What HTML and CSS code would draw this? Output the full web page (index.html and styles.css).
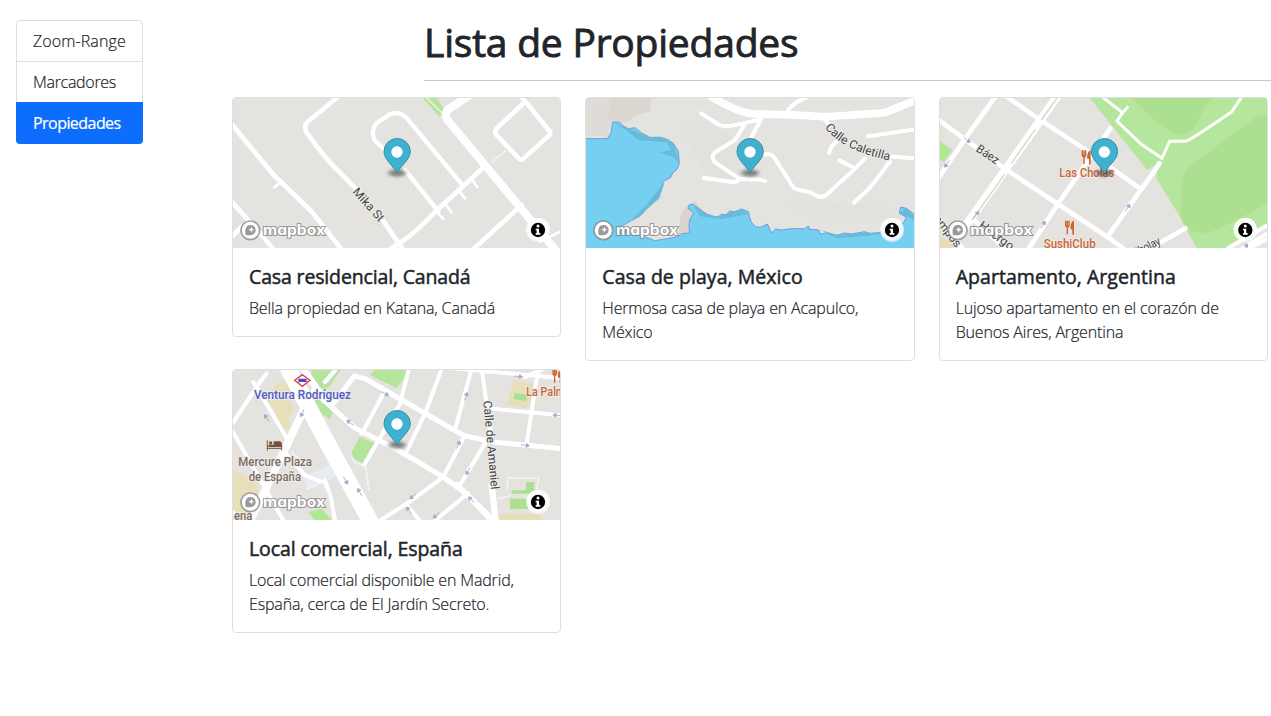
FILE: index.html
```html
<!DOCTYPE html>
<html lang="es">
<head>
<meta charset="utf-8">
<title>Lista de Propiedades</title>
<link rel="stylesheet" href="styles.css">
</head>
<body>
<svg class="defs" aria-hidden="true">
  <defs>
    <filter id="soft" x="-50%" y="-100%" width="200%" height="300%"><feGaussianBlur stdDeviation="6 4"/></filter>
    <g id="pin">
      <ellipse cx="0" cy="249" rx="26" ry="11" fill="#333" opacity=".55" filter="url(#soft)"/>
      <path d="M0 249C-9 229-39 209-39 185A39.500 39.500 0 0 1 40 185C40 209 9 229 0 249Z" fill="#3fb1ce" stroke="#328ea5" stroke-width="3"/>
      <circle cx="0" cy="186" r="17" fill="#fff"/>
    </g>
    <g id="logo">
      <circle cx="76" cy="421" r="28" fill="#fff" stroke="#777" stroke-opacity=".7" stroke-width="5"/>
      <path d="M62 435C58 414 65 405 77 405A15 15 0 0 1 92 419C92 431 82 439 62 435Z" fill="#777" fill-opacity=".75"/>
      <path d="M79 410L81.500 416.500L88 419L81.500 421.500L79 428L76.500 421.500L70 419L76.500 416.500Z" fill="#fff"/>
      <text class="wordmark" x="114" y="436" textLength="186" lengthAdjust="spacingAndGlyphs">mapbox</text>
    </g>
    <g id="info">
      <circle cx="939" cy="420" r="36" fill="#fff" fill-opacity=".6"/>
      <circle cx="939" cy="417" r="34" fill="#fff" fill-opacity=".75"/>
      <circle cx="939" cy="420" r="21.500"/>
      <circle cx="939" cy="408" r="4.500" fill="#fff"/>
      <path d="M932 416H942V429H946V434H932V429H935V421H932Z" fill="#fff"/>
    </g>
    <g id="fork">
      <path d="M-12-21V-8Q-12-2-7-2V20M-7-21V-2M-2-21V-8Q-2-2-7-2" fill="none" stroke-width="4" stroke="#d0632a"/>
      <path d="M13-21V21H8V5H3C2-8 5-20 13-21Z" fill="#d0632a"/>
    </g>
    <path id="arrow" d="M-13 0H11M3-6L12 0L3 6Z" fill="#a6aac7" stroke="#a6aac7" stroke-width="2.500"/>
  </defs>
</svg>

<div class="page">
  <nav class="menu">
    <a class="item zoom-link">Zoom-Range</a>
    <a class="item marks-link">Marcadores</a>
    <a class="item active">Propiedades</a>
  </nav>
  <main class="content">
    <header class="heading"><h1>Lista de Propiedades</h1></header>
    <div class="cards">

      <article class="card">
        <svg class="map" viewBox="24 24 982 450" preserveAspectRatio="none">
          <path d="M590 20H633L661 65L643 80Z" fill="#b5e49b"/>
          <path d="M606 24L652 70" class="track"/>
          <g class="roads">
            <path stroke-width="15" d="M340 20L249 95Q235 108 244 126Q300 205 335 238L400 304M470 385L532 476M10 90L145 254L260 365L348 476M15 330L100 423L147 480M20 440L50 410M475 490L530 455Q575 425 632 364L778 230M890 345L742 480M885 15L975 125Q979 134 967 141L894 207Q886 212 879 203L814 134Q808 123 816 114L894 41"/>
            <path stroke-width="14" d="M540 240L640 364M485 185L450 152Q435 125 454 100L494 73Q520 62 543 82L712 285"/>
            <path stroke-width="25" d="M735 15L670 58Q656 72 669 92L990 478"/>
            <path stroke-width="9" d="M148 292L168 276M738 264L756 290M703 303L720 325M662 344L680 367M634 364L655 387M945 455L1008 424"/>
          </g>
          <path d="M800 217L842 182" class="track"/>
          <text class="street" transform="translate(381 307) rotate(48)" textLength="122" lengthAdjust="spacingAndGlyphs">Mika St</text>
          <use href="#pin" x="516"/><use href="#logo"/><use href="#info"/>
        </svg>
        <div class="card-body"><h5 class="t1">Casa residencial, Canadá</h5><p class="d1">Bella propiedad en Katana, Canadá</p></div>
      </article>

      <article class="card">
        <svg class="map" viewBox="24 24 982 450" preserveAspectRatio="none">
          <path d="M90 24H220L215 65Q165 75 145 98L75 95Z" fill="#dbd6d0"/>
          <path d="M24 24H100L90 75L102 98L90 140L24 136Z" fill="#dfdcd7"/>
          <path d="M300 100Q360 75 410 110L520 180L465 280L380 250ZM610 335Q680 310 790 350L900 330L970 400L720 405Z" fill="#e1e1dd"/>
          <path d="M310 365L350 330Q375 380 430 384L500 362L520 415L300 440Z" fill="#dbd4cc"/>
          <path d="M10 146H88L99 128L104 96L125 97L135 107L151 116L170 113L190 128L215 142L248 142L270 149L286 160L301 184L304 220L297 238L286 247L277 263L256 274L249 296L240 302L236 318L221 330L205 348L197 366L187 377L160 392L130 409L165 430L200 440L230 452L260 447L302 440L312 431L335 429L333 410L335 390L347 368L330 355L334 344L345 343L365 357L384 371L403 378L420 381L430 373L445 374L455 363L470 366L490 357L512 365L514 380L520 396L533 411L550 411L568 402L581 429L592 417L610 420L640 416L680 416L691 408L695 418L722 420L728 433L745 428L760 436L780 435L800 429L820 432L860 425L880 432L915 425L940 410L976 399L985 382L964 370L968 351L985 355L1020 382V490H10Z" fill="#75cff0" stroke="#6b9de7" stroke-width="3"/>
          <path d="M104 96L151 116L215 142L248 142L286 160L304 220L286 200L245 188L278 180L267 157L180 150L145 120Z" fill="#68bad7"/>
          <path d="M260 276L244 325L180 382L160 391L205 345ZM345 343L384 371L420 381L490 357L512 372L430 387L365 379ZM728 420L780 435L915 425L920 432L780 445ZM964 370L985 355L1010 380V390Z" fill="#68bad7"/>
          <g class="roads">
            <path stroke-width="24" d="M400 20Q495 78 550 72Q650 74 740 80Q910 70 920 68L1010 32"/>
            <path stroke-width="13" d="M625 70Q635 42 690 20M370 70L421 103Q438 113 473 105L549 88M550 86L520 142M502 101L471 150L410 188Q398 198 409 215L482 265Q478 278 465 276L377 264M480 267L548 269L561 274M550 192L575 193Q587 197 597 215L634 273Q644 297 660 299L700 308Q732 332 750 310L830 237L862 205M785 211L828 234M738 86L756 107M777 153L761 169L753 189M870 139L1010 118M940 200L1010 205M936 215L875 294L828 338"/>
          </g>
          <path id="caletilla" d="M741 112Q790 182 945 214" fill="none"/>
          <text class="street"><textPath href="#caletilla" textLength="222" lengthAdjust="spacingAndGlyphs">Calle Caletilla</textPath></text>
          <use href="#pin" x="516"/><use href="#logo"/><use href="#info" x="3"/>
        </svg>
        <div class="card-body"><h5 class="t2">Casa de playa, México</h5><p class="d2">Hermosa casa de playa en Acapulco,<br>México</p></div>
      </article>

      <article class="card">
        <svg class="map" viewBox="29 24 982 450" preserveAspectRatio="none">
          <path d="M475 20L560 126L650 240L685 220L677 265L740 365L800 476H900L1015 400V20Z" fill="#b5e69e"/>
          <path d="M605 24Q695 125 750 134Q785 135 805 95Q820 50 850 24ZM1011 75H985L915 125L775 232Q750 260 752 300V365Q753 430 825 430Q850 430 1011 340Z" fill="#aae08f" stroke="#c6dc92" stroke-width="3"/>
          <path d="M24 150L65 180L40 216L24 204Z" fill="#aee890"/>
          <path d="M24 435L90 476H24Z" fill="#e7dcb4"/>
          <path d="M900 476L1012 402V476Z" fill="#e4e4e2"/>
          <path d="M890 476L1012 405M935 476L1012 430M952 476L1012 446" fill="none" stroke="#fff" stroke-width="12"/>
          <g class="roads">
            <path stroke-width="15" d="M20 86L232 242L533 442L580 476M215 10L330 90L458 174L628 295M195 20L105 145L24 265M540 115L384 340L295 476M672 243L533 438M687 220L672 243M15 370L100 480M130 390L225 476M765 415L615 500"/>
            <path stroke-width="26" d="M387 10L105 409"/>
          </g>
          <path d="M380 24L333 90M315 118L243 220M222 254L125 390" stroke="#cddbc7" stroke-width="4" fill="none"/>
          <path d="M515 20L577 68L594 49M577 68L560 93L632 162L695 205L718 154H765Q780 151 904 65L935 20" fill="none" stroke="#fff" stroke-width="9"/>
          <use href="#arrow" transform="translate(110 150) rotate(36)"/><use href="#arrow" transform="translate(50 222) rotate(125)"/><use href="#arrow" transform="translate(138 374) rotate(-55)"/><use href="#arrow" transform="translate(338 404) rotate(-55)"/><use href="#arrow" transform="translate(592 353) rotate(-55)"/><use href="#arrow" transform="translate(945 472) rotate(-55)"/>
          <text class="street" transform="translate(135 182) rotate(34)" textLength="75" lengthAdjust="spacingAndGlyphs">Báez</text>
          <text class="street" transform="translate(143 411) rotate(36)" textLength="120" lengthAdjust="spacingAndGlyphs">Huergo</text>
          <text class="street" transform="translate(-6 369) rotate(52)" textLength="134" lengthAdjust="spacingAndGlyphs">Campos</text>
          <text class="street" transform="translate(590 514) rotate(-27)" textLength="116" lengthAdjust="spacingAndGlyphs">Arribolay</text>
          <use href="#fork" x="468" y="202"/><use href="#fork" x="418" y="413"/>
          <text class="poi food" x="387" y="262" textLength="165" lengthAdjust="spacingAndGlyphs">Las Cholas</text>
          <text class="poi food" x="340" y="473" textLength="156" lengthAdjust="spacingAndGlyphs">SushiClub</text>
          <use href="#pin" x="522"/><use href="#logo" x="6"/><use href="#info" x="6"/>
        </svg>
        <div class="card-body"><h5 class="t3">Apartamento, Argentina</h5><p class="d3">Lujoso apartamento en el corazón de<br>Buenos Aires, Argentina</p></div>
      </article>

      <article class="card">
        <svg class="map" viewBox="24 24 982 450" preserveAspectRatio="none">
          <path d="M260 20H350L305 85L260 65ZM245 80L325 145L315 172L290 155ZM450 20H560L515 78L435 40ZM404 224L451 245L416 305L384 287L380 270Z" fill="#b5e49b"/>
          <path d="M115 105L170 55L212 70L190 110L206 138L190 170L196 200L160 200L150 145ZM24 325L95 358L105 430L24 474ZM867 53L940 69L905 138L845 130ZM820 456H950V476H820Z" fill="#e6dfb9"/>
          <path d="M234 346L325 304L328 320L360 330L375 355L330 345L252 385Z" fill="#e9ebf2"/>
          <path d="M868 93L906 98L903 117L866 111ZM860 385H903V360H928V395H860ZM855 410H910V441H855Z" fill="#aae090"/>
          <path d="M250 450L290 440L320 474H268Z" fill="#aee890"/>
          <g class="roads">
            <path stroke-width="13" d="M-5 225L105 60L125 35M85 60L195 244L180 270M24 210L178 480M330 25L300 60M178 270L240 340L290 360M650 20L600 155L540 278M740 20L691 200M552 20L525 125L418 308M475 95L410 215M940 20L905 243M770 20L800 235M800 140L1010 160M780 245L704 370M720 220L655 345L560 415L465 476M730 393L630 476M545 430L585 476M690 20L1010 48M900 45L955 20M695 365L810 476M24 450L45 476M300 355L318 408L330 476"/>
            <path stroke-width="16" d="M265 85L385 195L520 265L655 345L720 393L800 476M325 125L388 42L420 50L715 220L805 240L1010 260"/>
            <path stroke-width="24" d="M240 135L118 390L75 476"/>
            <path stroke-width="50" d="M190 20L240 115L300 230L448 500"/>
            <path stroke-width="20" d="M230 15L290 100M240 125L290 210M800 370L812 476"/>
          </g>
          <path d="M420 305L432 382M380 285L390 302L415 310M845 382L850 348H940L935 385M820 410L860 400M200 270L240 310M245 382L290 360L320 410" class="track"/>
          <g fill="none">
            <use href="#arrow" transform="translate(125 168) rotate(237)"/><use href="#arrow" transform="translate(232 153) rotate(115)"/><use href="#arrow" transform="translate(375 182) rotate(218)"/><use href="#arrow" transform="translate(480 95) rotate(28)"/><use href="#arrow" transform="translate(723 103) rotate(-72)"/><use href="#arrow" transform="translate(880 43) rotate(5)"/><use href="#arrow" transform="translate(996 160) rotate(184)"/><use href="#arrow" transform="translate(901 250) rotate(5)"/><use href="#arrow" transform="translate(700 248) rotate(-67)"/><use href="#arrow" transform="translate(729 328) rotate(120)"/><use href="#arrow" transform="translate(362 356) rotate(60)"/><use href="#arrow" transform="translate(404 390) rotate(240)"/><use href="#arrow" transform="translate(564 403) rotate(145)"/><use href="#arrow" transform="translate(552 445) rotate(235)"/><use href="#arrow" transform="translate(634 460) rotate(140)"/><use href="#arrow" transform="translate(739 413) rotate(222)"/>
          </g>
          <path d="M232 38L255 55L232 73L209 55Z" fill="#fff" stroke="#e9353e" stroke-width="4"/><path d="M220 50H245V60H220Z" fill="#4150ca"/>
          <path d="M127 235V266M127 259H170M170 266V249" stroke="#79503a" stroke-width="3" fill="none"/><path d="M146 238H165Q171 239 171 252H146ZM130 248H171V255H130Z" fill="#79503a"/><circle cx="137" cy="243" r="5" fill="#79503a"/>
          <text class="poi metro" x="87" y="111" textLength="291" lengthAdjust="spacingAndGlyphs">Ventura Rodríguez</text>
          <text class="poi hotel" x="40" y="312" textLength="221" lengthAdjust="spacingAndGlyphs">Mercure Plaza</text>
          <text class="poi hotel" x="71" y="356" textLength="157" lengthAdjust="spacingAndGlyphs">de España</text>
          <text class="poi hotel" x="27" y="474" textLength="55" lengthAdjust="spacingAndGlyphs">ena</text>
          <text class="poi food" x="904" y="102" textLength="134" lengthAdjust="spacingAndGlyphs">La Palma</text><use href="#fork" x="996" y="42"/>
          <text class="street" transform="translate(775 117) rotate(85)" textLength="267" lengthAdjust="spacingAndGlyphs">Calle de Amaniel</text>
          <use href="#pin" x="516"/><use href="#logo"/><use href="#info"/>
        </svg>
        <div class="card-body"><h5 class="t4">Local comercial, España</h5><p class="d4">Local comercial disponible en Madrid,<br>España, cerca de El Jardín Secreto.</p></div>
      </article>
    </div>
  </main>
</div>
</body>
</html>
```
FILE: styles.css
```css
* { box-sizing: border-box; }
html { overflow: hidden; }
body {
  margin: 0;
  background: #fff;
  color: #212529;
  font: 300 16px/24px "Open Sans", "Noto Sans", sans-serif;
  -webkit-text-stroke: .2px currentColor;
  overflow: hidden;
}
svg { -webkit-text-stroke: 0; }
h1, h5, p { margin: 0; white-space: nowrap; }
.defs { position: absolute; width: 0; height: 0; }
.page { display: flex; width: 1280px; padding: 20px 0 0 16px; }
.menu {
  display: flex;
  flex-direction: column;
  flex: none;
  width: 127px;
  height: 124px;
  border: 1px solid #dfdfdf;
  border-radius: 4px;
}
.item { height: 41px; padding: 8px 16px; border-bottom: 1px solid #dfdfdf; white-space: nowrap; }
.zoom-link { letter-spacing: .1px; }
.marks-link { height: 40px; border-bottom: 0; letter-spacing: -.3px; }
.item.active {
  height: 42px;
  margin: 0 -1px -1px;
  padding: 9px 17px;
  border: 0;
  border-radius: 0 0 4px 4px;
  background: #0d6efd;
  color: #fff;
  font-weight: 400;
  letter-spacing: -.55px;
}
.content { flex: none; width: 1036px; margin-left: 89px; }
.heading { height: 61px; margin-left: 192px; border-bottom: 1px solid #c8c9ca; width: 847px; }
h1 { font-size: 39px; line-height: 44px; font-weight: 400; letter-spacing: -.22px; -webkit-text-stroke: .9px currentColor; }
.cards {
  display: grid;
  grid-template-columns: repeat(3, 329.33px);
  gap: 8px 24px;
  align-items: start;
  margin-top: 16px;
}
.card { border: 1px solid #dfdfdf; border-radius: 4px; overflow: hidden; }
.map { display: block; width: 100%; height: 150px; background: #e4e3e0; }
.card-body { padding: 17px 16px 16px; }
h5 { font-size: 19.5px; line-height: 24px; font-weight: 400; margin-bottom: 7px; -webkit-text-stroke: .5px currentColor; }
.t1 { letter-spacing: -.15px; }
.t2, .t3 { letter-spacing: .05px; }
.t4 { letter-spacing: -.1px; }
.d1, .d2, .d3, .d4 { letter-spacing: -.16px; }
.roads { fill: none; stroke: #fff; stroke-linecap: round; stroke-linejoin: round; filter: drop-shadow(0 0 1px #c5c5de); }
.track { fill: none; stroke: #f7f7fa; stroke-width: 5; stroke-dasharray: 6 2; }
.street, .poi {
  font-family: Roboto, sans-serif;
  font-size: 36px;
  font-weight: 400;
  fill: #444;
  stroke: #efefed;
  stroke-width: 5px;
  paint-order: stroke;
}
.poi { font-weight: 500; }
.food { fill: #cb6434; }
.hotel { fill: #806a5f; }
.metro { fill: #4f5dc6; }
.wordmark {
  font-family: Inter, sans-serif;
  font-feature-settings: "cv11";
  font-size: 44px;
  font-weight: 700;
  fill: #fff;
  stroke: #777;
  stroke-opacity: .7;
  stroke-width: 6px;
  paint-order: stroke;
}
```
